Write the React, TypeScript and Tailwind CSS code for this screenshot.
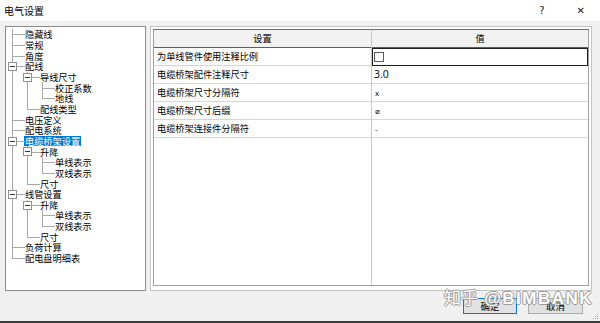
import React from 'react';

interface TreeItem {
  label: string;
  level: number;
  selected?: boolean;
}

const treeItems: TreeItem[] = [
  { label: '隐藏线', level: 0 },
  { label: '常规', level: 0 },
  { label: '角度', level: 0 },
  { label: '配线', level: 0 },
  { label: '导线尺寸', level: 1 },
  { label: '校正系数', level: 2 },
  { label: '地线', level: 2 },
  { label: '配线类型', level: 1 },
  { label: '电压定义', level: 0 },
  { label: '配电系统', level: 0 },
  { label: '电缆桥架设置', level: 0, selected: true },
  { label: '升降', level: 1 },
  { label: '单线表示', level: 2 },
  { label: '双线表示', level: 2 },
  { label: '尺寸', level: 1 },
  { label: '线管设置', level: 0 },
  { label: '升降', level: 1 },
  { label: '单线表示', level: 2 },
  { label: '双线表示', level: 2 },
  { label: '尺寸', level: 1 },
  { label: '负荷计算', level: 0 },
  { label: '配电盘明细表', level: 0 },
];

const rows = [
  { name: '为单线管件使用注释比例', value: 'checkbox' },
  { name: '电缆桥架配件注释尺寸', value: '3.0' },
  { name: '电缆桥架尺寸分隔符', value: 'x' },
  { name: '电缆桥架尺寸后缀', value: 'ø' },
  { name: '电缆桥架连接件分隔符', value: '-' },
];

const hasNextSibling = (i: number) => {
  const lvl = treeItems[i].level;
  for (let j = i + 1; j < treeItems.length; j++) {
    if (treeItems[j].level < lvl) return false;
    if (treeItems[j].level === lvl) return true;
  }
  return false;
};

const ancestorAt = (i: number, lvl: number) => {
  for (let j = i - 1; j >= 0; j--) {
    if (treeItems[j].level === lvl) return j;
  }
  return -1;
};

const TreeRow: React.FC<{ item: TreeItem; index: number }> = ({ item, index }) => {
  const next = treeItems[index + 1];
  const expandable = next && next.level > item.level;
  const cols = [];

  for (let k = 0; k < item.level; k++) {
    const a = ancestorAt(index, k);
    cols.push(
      <div key={k} className="relative h-full w-[15px] shrink-0">
        {a >= 0 && hasNextSibling(a) && (
          <div className="absolute left-[6px] top-0 h-full w-px bg-[#a9a9a9]" />
        )}
      </div>
    );
  }

  cols.push(
    <div key="own" className="relative h-full w-[15px] shrink-0">
      <div className="absolute left-[6px] top-0 h-1/2 w-px bg-[#a9a9a9]" />
      {hasNextSibling(index) && (
        <div className="absolute left-[6px] top-1/2 h-[calc(50%+1px)] w-px bg-[#a9a9a9]" />
      )}
      <div className="absolute left-[6px] top-1/2 h-px w-[13px] bg-[#a9a9a9]" />
      {expandable && (
        <div className="absolute left-[2px] top-[1px] flex h-[9px] w-[9px] items-center justify-center border border-[#919191] bg-white">
          <div className="h-px w-[5px] bg-[#333]" />
        </div>
      )}
    </div>
  );

  return (
    <div className="flex h-[10.67px] items-center">
      {cols}
      <span
        className={
          item.selected
            ? 'ml-[3px] inline-block h-[10px] bg-[#0078d7] px-px leading-[10px] text-white'
            : 'ml-[4px] inline-block h-[10px] leading-[10px] text-black'
        }
      >
        {item.label}
      </span>
    </div>
  );
};

export default function App() {
  return (
    <div className="relative flex h-[323px] w-[600px] flex-col overflow-hidden border-b-2 border-[#3a3a3a] bg-[#f0f0f0] font-['Noto_Sans_CJK_SC','Microsoft_YaHei',sans-serif] text-[9.2px] text-black">
      {/* title bar */}
      <div className="flex h-[21px] shrink-0 items-center bg-white pl-[4px]">
        <span className="text-[10px]">电气设置</span>
        <span className="ml-auto mr-[32px] font-['DejaVu_Sans',sans-serif] text-[10px] text-[#222]">?</span>
        <span className="mr-[15px] font-['DejaVu_Sans',sans-serif] text-[10px] text-[#222]">✕</span>
      </div>

      {/* body */}
      <div className="flex shrink-0 gap-[4px] px-[5px] pt-[5px]">
        <div className="h-[265px] w-[141px] overflow-hidden border border-[#8c8c8c] bg-white pt-[2px]">
          {treeItems.map((item, i) => (
            <TreeRow key={i} item={item} index={i} />
          ))}
        </div>

        <div className="h-[265px] w-[442px] border border-[#c4c4c4] bg-white p-[2px]">
          <div className="flex h-[257px] border-b border-l border-t border-[#a0a0a0] border-t-[#6e6e6e]">
            <div className="flex w-[218px] flex-col border-r border-[#c8c8c8]">
              <div className="flex h-[18px] items-center justify-center border-b border-[#5e5e5e] bg-[#f2f2f2]">
                设置
              </div>
              {rows.map((r, i) => (
                <div key={i} className="flex h-[18px] items-center border-b border-[#d6d6d6] pl-[3px]">
                  {r.name}
                </div>
              ))}
            </div>
            <div className="flex w-[217px] flex-col border-r border-[#a0a0a0]">
              <div className="flex h-[18px] items-center justify-center border-b border-[#5e5e5e] bg-[#f2f2f2]">
                值
              </div>
              {rows.map((r, i) =>
                r.value === 'checkbox' ? (
                  <div key={i} className="flex h-[18px] items-center border border-[#1f1f1f] pl-px">
                    <div className="h-[10px] w-[10px] border border-[#5a5a5a] bg-white" />
                  </div>
                ) : (
                  <div
                    key={i}
                    className={
                      r.value === '3.0'
                        ? "flex h-[18px] items-center border-b border-[#d6d6d6] pl-[2px] font-['Open_Sans',sans-serif] text-[10.5px]"
                        : "flex h-[18px] items-center border-b border-[#d6d6d6] pl-[3px] font-['Open_Sans',sans-serif] text-[8px]"
                    }
                  >
                    {r.value}
                  </div>
                )
              )}
            </div>
          </div>
        </div>
      </div>

      {/* footer */}
      <div className="flex flex-1 items-start justify-end gap-[11px] pr-[17px] pt-[7px]">
        <button className="flex h-[16px] w-[54px] items-center justify-center border border-[#0078d7] bg-[#e1e1e1] text-[9.5px]">
          确定
        </button>
        <button className="flex h-[16px] w-[55px] items-center justify-center border border-[#adadad] bg-[#e1e1e1] text-[9.5px]">
          取消
        </button>
      </div>

      {/* resize grip */}
      <div className="absolute bottom-[2px] right-[2px] grid grid-cols-3 gap-px">
        <span className="h-px w-px" />
        <span className="h-px w-px" />
        <span className="h-px w-px bg-[#999]" />
        <span className="h-px w-px" />
        <span className="h-px w-px bg-[#999]" />
        <span className="h-px w-px bg-[#999]" />
        <span className="h-px w-px bg-[#999]" />
        <span className="h-px w-px bg-[#999]" />
        <span className="h-px w-px bg-[#999]" />
      </div>

      {/* watermark */}
      <div className="pointer-events-none absolute left-[444px] top-[284px] whitespace-nowrap font-['Liberation_Sans',sans-serif] text-[17px] font-bold tracking-[1.5px] text-white [text-shadow:1px_0_0_#9a9a9a,-1px_0_0_#9a9a9a,0_1px_0_#9a9a9a,0_-1px_0_#9a9a9a]">
        <span className="font-['Noto_Sans_CJK_SC',sans-serif] font-normal tracking-[0px]">知乎</span> @BIMBANK
      </div>
    </div>
  );
}
